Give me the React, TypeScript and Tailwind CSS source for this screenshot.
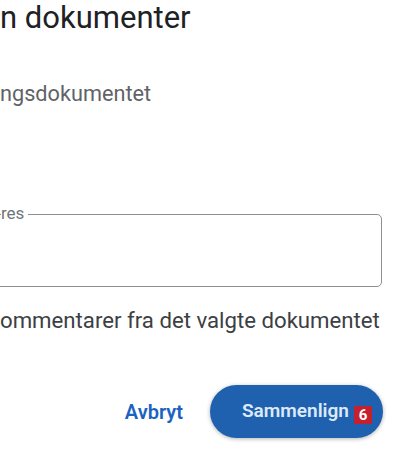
import React from "react";

export default function App() {
  return (
    <div className="w-[396px] h-[450px] bg-white overflow-hidden relative" style={{ fontFamily: "Roboto, Arial, sans-serif" }}>
      <h1 className="text-[31px] leading-[36px] text-[#202124] font-normal whitespace-nowrap">n dokumenter</h1>
      <p className="mt-[44px] text-[21.7px] leading-[28px] text-[#5f6368] whitespace-nowrap">ngsdokumentet</p>
      <div className="mt-[106px] ml-[-20px] w-[402px] h-[73px] border border-[#8e8e8e] rounded-[5px] relative">
        <span className="absolute left-[20px] top-[-13px] bg-white pr-[4px] text-[17px] leading-[22px] text-[#70757a]">res</span>
      </div>
      <p className="mt-[19px] text-[22.2px] leading-[28px] text-[#3c4043] whitespace-nowrap">ommentarer fra det valgte dokumentet</p>
      <div className="mt-[51px] flex items-center justify-end pr-[13px]">
        <button className="text-[20px] font-semibold text-[#1b63c1] mr-[27px]">Avbryt</button>
        <button className="h-[53px] w-[173px] rounded-full bg-[#1f61af] shadow-[0_1px_4px_rgba(0,0,0,0.3)] flex items-center pl-[32px]">
          <span className="text-[19px] font-semibold text-[#dce9f8]">Sammenlign</span>
          <span className="ml-[5px] mt-[6px] w-[18px] h-[18px] bg-[#c4202d] text-white text-[15px] font-bold leading-[18px] flex items-center justify-center">6</span>
        </button>
      </div>
    </div>
  );
}
